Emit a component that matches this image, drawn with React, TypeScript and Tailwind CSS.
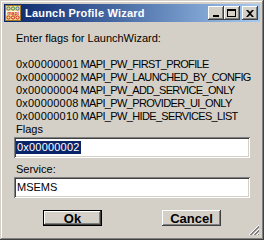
import React from 'react'

const font = { fontFamily: '"Liberation Sans", Arial, sans-serif' }

const flags = [
  ['0x00000001', 'MAPI_PW_FIRST_PROFILE'],
  ['0x00000002', 'MAPI_PW_LAUNCHED_BY_CONFIG'],
  ['0x00000004', 'MAPI_PW_ADD_SERVICE_ONLY'],
  ['0x00000008', 'MAPI_PW_PROVIDER_UI_ONLY'],
  ['0x00000010', 'MAPI_PW_HIDE_SERVICES_LIST'],
]

const raised =
  'shadow-[inset_-1px_-1px_0_#404040,inset_1px_1px_0_#ffffff,inset_-2px_-2px_0_#808080,inset_2px_2px_0_#d4d0c8]'
const sunken =
  'shadow-[inset_1px_1px_0_#808080,inset_-1px_-1px_0_#ffffff,inset_2px_2px_0_#404040,inset_-2px_-2px_0_#d4d0c8]'

// small "mapi" app icon in the caption
const MapiIcon = () => (
  <svg width="16" height="16" viewBox="0 0 16 16" className="shrink-0">
    <rect x="0.5" y="0.5" width="15" height="15" fill="#f4dc8c" stroke="#9c7a28" />
    <circle cx="3.5" cy="3.5" r="1.6" fill="none" stroke="#3a6ea8" />
    <circle cx="8" cy="3.5" r="1.6" fill="none" stroke="#3a8a5a" />
    <circle cx="12.5" cy="3.5" r="1.6" fill="none" stroke="#3a6ea8" />
    <rect x="1" y="6" width="14" height="4" fill="#fff8e0" />
    <text x="8" y="9.6" textAnchor="middle" fontSize="5" fontWeight="bold" fill="#d01818" fontFamily="Liberation Sans, sans-serif">mapi</text>
    <circle cx="3.5" cy="12.5" r="1.6" fill="none" stroke="#d02020" />
    <circle cx="8" cy="12.5" r="1.6" fill="none" stroke="#d02020" />
    <circle cx="12.5" cy="12.5" r="1.6" fill="none" stroke="#d02020" />
  </svg>
)

const CaptionButton = ({ children }: { children: React.ReactNode }) => (
  <div className={`w-[16px] h-[14px] bg-[#d4d0c8] flex items-center justify-center ${raised}`}>
    {children}
  </div>
)

export default function App() {
  return (
    <div
      className="w-[264px] h-[240px] bg-[#d4d0c8] p-[4px] flex flex-col relative shadow-[inset_-1px_-1px_0_#404040,inset_1px_1px_0_#d4d0c8,inset_-2px_-2px_0_#808080,inset_2px_2px_0_#ffffff]"
      style={font}
    >
      {/* Caption */}
      <div className="h-[18px] flex items-center bg-gradient-to-r from-[#0a246a] to-[#a6caf0]">
        <div className="ml-[1px]">
          <MapiIcon />
        </div>
        <span className="ml-[4px] text-[11px] font-bold text-white leading-none tracking-[0.2px]">Launch Profile Wizard</span>
        <div className="ml-auto mr-[2px] flex items-center">
          <CaptionButton>
            <div className="w-[6px] h-[2px] bg-black mt-[6px] -ml-[1px]" />
          </CaptionButton>
          <CaptionButton>
            <div className="w-[9px] h-[8px] border border-black border-t-2 -ml-[1px]" />
          </CaptionButton>
          <div className="ml-[2px]">
            <CaptionButton>
              <svg width="8" height="7" viewBox="0 0 8 7" className="-ml-[1px]">
                <path d="M0 0h2l2 2 2-2h2L5 3.5 8 7H6L4 5 2 7H0l3-3.5z" fill="#000" />
              </svg>
            </CaptionButton>
          </div>
        </div>
      </div>

      {/* Body */}
      <div className="flex-1 flex flex-col px-[10px] text-[11px] leading-[13px] text-black">
        <div className="mt-[10px] ml-[2px]">Enter flags for LaunchWizard:</div>
        <div className="h-[13px]" />
        {flags.map(([code, name]) => (
          <div key={code} className="ml-[2px] flex">
            <span className="tracking-[0.2px]">{code}</span>
            <span className="ml-[2px] tracking-[-0.65px]">{name}</span>
          </div>
        ))}
        <div className="ml-[2px]">Flags</div>
        <div className={`mt-[1px] h-[21px] bg-white flex items-center pl-[2px] ${sunken}`}>
          <span className="bg-[#0a246a] text-white px-[1px] tracking-[0.2px]">0x00000002</span>
        </div>
        <div className="mt-[5px] ml-[2px]">Service:</div>
        <div className={`mt-[1px] h-[21px] bg-white flex items-center pl-[3px] ${sunken}`}>
          <span>MSEMS</span>
        </div>

        <div className="mt-[12px] flex justify-center gap-[60px]">
          <div className="w-[59px] h-[16px] border border-black">
            <div className={`w-full h-full flex items-center justify-center text-[13px] font-bold ${raised}`}>
              Ok
            </div>
          </div>
          <div className={`w-[59px] h-[16px] flex items-center justify-center text-[13px] font-bold ${raised}`}>
            Cancel
          </div>
        </div>
      </div>

      {/* Size grip */}
      <svg width="12" height="12" viewBox="0 0 12 12" className="absolute right-[4px] bottom-[4px]">
        <path d="M11 1L1 11M11 5L5 11M11 9L9 11" stroke="#ffffff" strokeWidth="1" />
        <path d="M11 2L2 11M11 3L3 11M11 6L6 11M11 7L7 11M11 10L10 11" stroke="#808080" strokeWidth="1" />
      </svg>
    </div>
  )
}
